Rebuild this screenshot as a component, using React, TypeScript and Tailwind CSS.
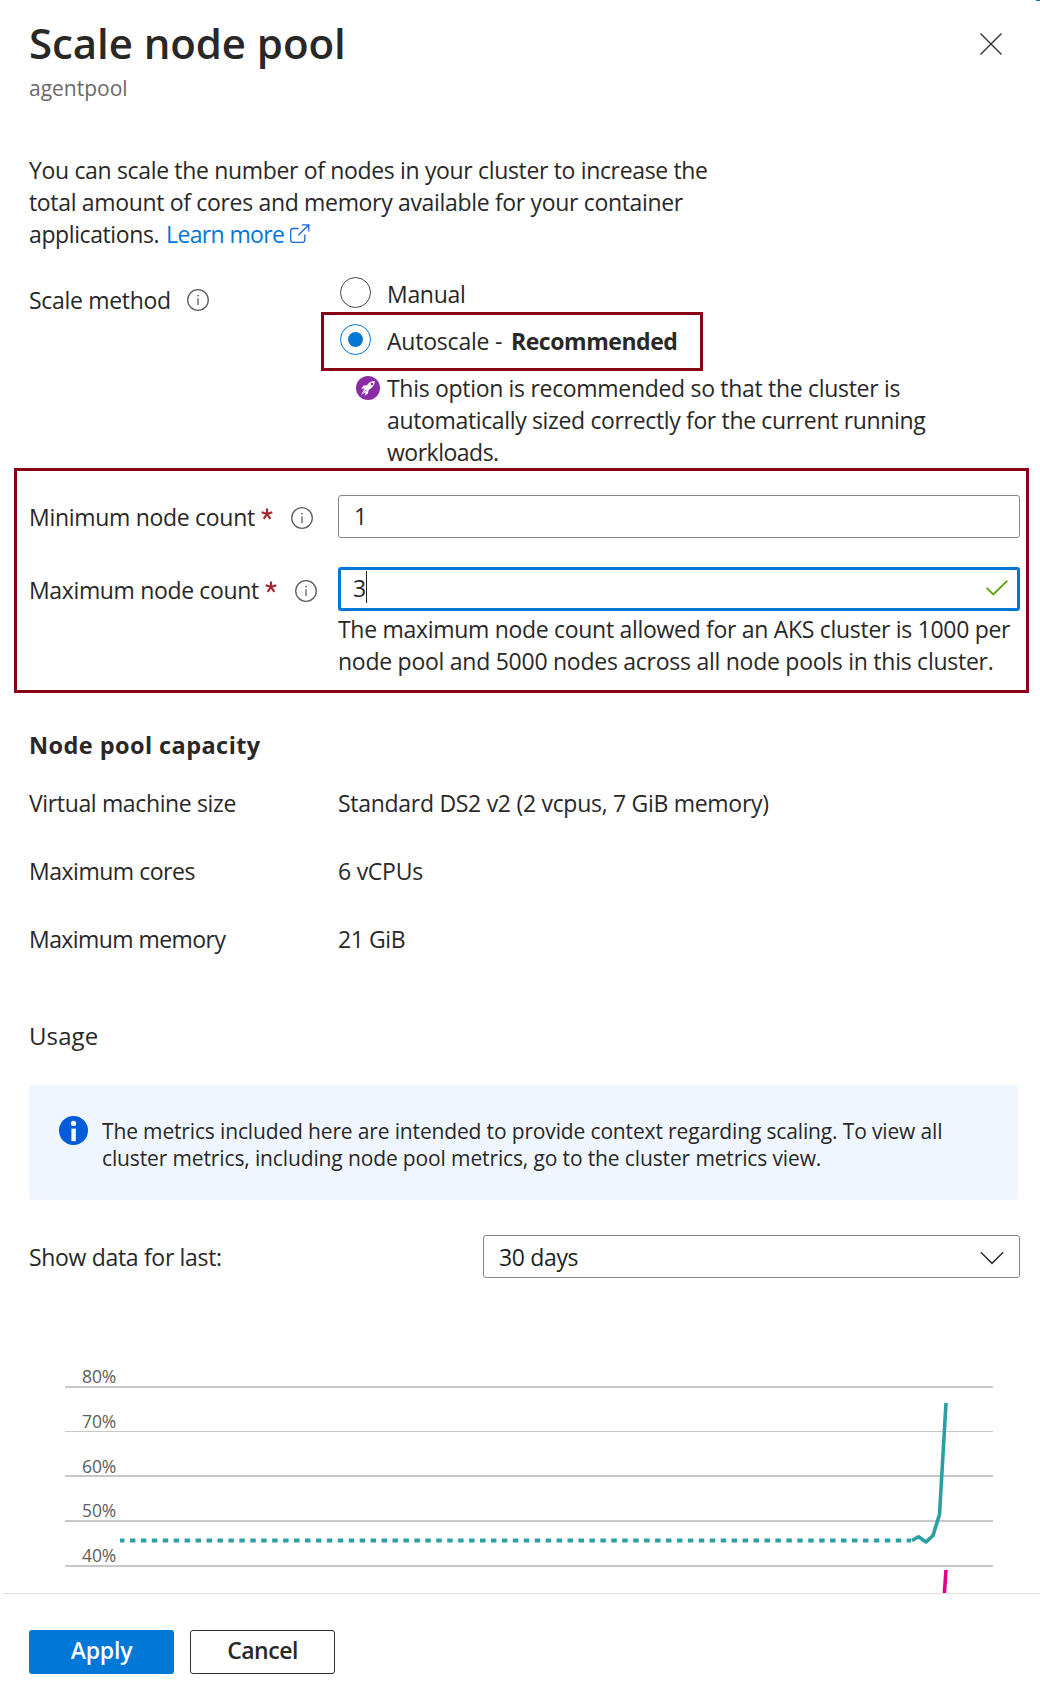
import React from "react";

function InfoIcon() {
  return (
    <svg viewBox="0 0 22 22" className="h-[22px] w-[22px] shrink-0" fill="none">
      <circle cx="11" cy="11" r="10.3" stroke="#605e5c" strokeWidth="1.3" />
      <path d="M11 9.2V16" stroke="#605e5c" strokeWidth="1.3" />
      <circle cx="11" cy="6.6" r="0.9" fill="#605e5c" />
    </svg>
  );
}

function RocketIcon() {
  return (
    <svg viewBox="0 0 24 24" className="mt-1 h-6 w-6 shrink-0">
      <circle cx="12" cy="12" r="12" fill="#8a2da5" />
      <path
        fill="#fff"
        d="M18.9 5.1c-3.400 0-5.900 1.300-7.900 4.100l-3.500.4-2.300 3.200 3.100-.3-.8 1.900-2.500 4.700 4.300-2.700.3.500-1 3 3.300-2.300.8-3.500c3.500-2 5.900-4.900 6.200-9z"
      />
      <circle cx="15.900" cy="8" r="1.250" fill="#8a2da5" />
      <path d="M8.200 13.200l2.600 2.600M6 18.200l4-4" stroke="#8a2da5" strokeWidth="0.5" />
    </svg>
  );
}

function FieldLabel({ text, tracking }: { text: string; tracking: string }) {
  return (
    <div className="flex items-start">
      <span className={tracking}>{text}</span>
      <svg viewBox="0 0 12 12" className="ml-[6px] mt-[7px] h-3 w-3" stroke="#a4262c" strokeWidth="2.2" fill="none">
        <path d="M6 0.500V6M6 6L0.700 4.200M6 6L11.300 4.200M6 6L2.700 10.800M6 6L9.300 10.800" />
      </svg>
      <div className="ml-[18px] mt-[6px]">
        <InfoIcon />
      </div>
    </div>
  );
}

const capacity = [
  { name: "Virtual machine size", nameCls: "tracking-[-0.36px]", value: "Standard DS2 v2 (2 vcpus, 7 GiB memory)", valueCls: "tracking-[-0.29px]" },
  { name: "Maximum cores", nameCls: "tracking-[-0.48px]", value: "6 vCPUs", valueCls: "tracking-[-0.25px]" },
  { name: "Maximum memory", nameCls: "tracking-[-0.56px]", value: "21 GiB", valueCls: "tracking-[-0.42px]" },
];

const ticks = [
  { label: "80%", y: 28, h: 2 },
  { label: "70%", y: 73, h: 1 },
  { label: "60%", y: 117, h: 2 },
  { label: "50%", y: 162, h: 2 },
  { label: "40%", y: 207, h: 2 },
];
const tickBaselines = [25, 70, 115, 159, 204];

function UsageChart() {
  return (
    <svg viewBox="0 0 1040 235" className="block h-[235px] w-[1040px]" fill="none">
      {ticks.map((t, i) => (
        <g key={t.label}>
          <rect x="65" y={t.y} width="928" height={t.h} fill="#c8c8c8" />
          <text x="82" y={tickBaselines[i]} fill="#605e5c" fontSize="17.5" letterSpacing="-0.1" fontFamily="Open Sans, sans-serif">
            {t.label}
          </text>
        </g>
      ))}
      <path d="M120 182.500H911" stroke="#2aa0a4" strokeWidth="3.800" strokeDasharray="5.470 5.470" strokeDashoffset="1" />
      <path d="M912 182.500L918.500 178.800L926 184L933 177.500L939.500 156.500L946 45" stroke="#2aa0a4" strokeWidth="3.600" strokeLinejoin="round" />
      <path d="M946 212L944.400 235" stroke="#e3008c" strokeWidth="3.600" />
    </svg>
  );
}

export default function App() {
  return (
    <div className="relative flex h-[1695px] w-[1040px] flex-col overflow-hidden bg-white font-['Open_Sans',sans-serif] text-[23px] leading-8 whitespace-nowrap text-[#292827]">
      <div className="absolute top-0 right-0 h-px w-1 bg-[#0078d4]" />

      <header className="flex h-[154px] items-start justify-between pl-[29px]">
        <div>
          <h1 className="mt-[14px] text-[42px] leading-[58px] font-semibold tracking-[-0.08px]">Scale node pool</h1>
          <p className="mt-px text-[21px] leading-[30px] text-[#6b6967]">agentpool</p>
        </div>
        <svg viewBox="0 0 22 22" className="mt-[33px] mr-[38px] h-[22px] w-[22px]" stroke="#323130" strokeWidth="1.400">
          <path d="M0.500 0.500L21.500 21.500M21.500 0.500L0.500 21.500" />
        </svg>
      </header>

      <section className="h-[124px] pl-[29px]">
        <p className="tracking-[-0.34px]">You can scale the number of nodes in your cluster to increase the</p>
        <p className="tracking-[-0.33px]">total amount of cores and memory available for your container</p>
        <p className="flex">
          <span className="w-[137px] tracking-[-0.4px]">applications.</span>
          <a className="w-[124px] tracking-[-0.63px] text-[#0078d4]">Learn more</a>
          <svg viewBox="0 0 20 20" className="mt-[6px] h-5 w-5" fill="none" stroke="#1a66e0" strokeWidth="1.300">
            <path d="M8.500 4.500H3Q0.700 4.500 0.700 6.800V16Q0.700 18.300 3 18.300H12.500Q14.800 18.300 14.800 16V10.500M12 0.800H18.800V7.500M18.800 0.800L8.300 11.300" />
          </svg>
        </p>
      </section>

      <section className="flex h-[190px] pl-[29px]">
        <div className="flex w-[292px] items-start pt-[6px]">
          <span className="tracking-[-0.31px]">Scale method</span>
          <div className="mt-[5px] ml-4">
            <InfoIcon />
          </div>
        </div>
        <div>
          <div className="flex h-[34px] items-start pl-[19px]">
            <span className="-mt-px h-[31px] w-[31px] rounded-full border border-[#484644]" />
            <span className="ml-4 tracking-[-0.3px]">Manual</span>
          </div>
          <div className="flex h-[59px] w-[382px] items-start border-[3px] border-[#8a0017] pt-[9px] pl-4">
            <span className="flex h-[31px] w-[31px] items-center justify-center rounded-full border border-[#0078d4]">
              <span className="h-[15px] w-[15px] rounded-full bg-[#0078d4]" />
            </span>
            <span className="mt-px ml-4 w-[124px] tracking-[-0.21px]">Autoscale -</span>
            <b className="mt-px font-bold tracking-[-0.45px]">Recommended</b>
          </div>
          <div className="flex items-start pt-px pl-[35px]">
            <RocketIcon />
            <div className="ml-[7px]">
              <p className="tracking-[-0.31px]">This option is recommended so that the cluster is</p>
              <p className="tracking-[-0.35px]">automatically sized correctly for the current running</p>
              <p className="tracking-[-0.5px]">workloads.</p>
            </div>
          </div>
        </div>
      </section>

      <section className="ml-[14px] h-[225px] w-[1015px] border-[3px] border-[#8a0017] pt-6 pr-[6px] pl-3">
        <div className="flex h-[72px]">
          <div className="w-[309px] pt-[6px]">
            <FieldLabel text="Minimum node count" tracking="tracking-[-0.3px]" />
          </div>
          <div className="h-[43px] flex-1 rounded-[3px] border border-[#8a8886] pt-1 pl-[15px]">1</div>
        </div>
        <div className="flex">
          <div className="w-[309px] pt-[7px]">
            <FieldLabel text="Maximum node count" tracking="tracking-[-0.35px]" />
          </div>
          <div className="flex-1">
            <div className="flex h-11 items-start justify-between rounded-[3px] border-[3px] border-[#0078d7] pt-[2px] pr-[9px] pl-3">
              <div className="flex">
                <span className="w-[13px]">3</span>
                <span className="-mt-px h-8 w-px bg-[#201f1e]" />
              </div>
              <svg viewBox="0 0 22 16" className="mt-2 h-4 w-[22px]" fill="none" stroke="#57a300" strokeWidth="1.800">
                <path d="M0.600 7.800L7.300 14.500L21.300 0.700" />
              </svg>
            </div>
            <p className="mt-[2px] tracking-[-0.3px]">The maximum node count allowed for an AKS cluster is 1000 per</p>
            <p className="tracking-[-0.26px]">node pool and 5000 nodes across all node pools in this cluster.</p>
          </div>
        </div>
      </section>

      <section className="mt-9 pl-[29px]">
        <h2 className="h-[58px] text-[23.500px] font-bold tracking-[0.43px]">Node pool capacity</h2>
        {capacity.map((row) => (
          <div key={row.name} className="flex h-[68px]">
            <span className={"w-[309px] " + row.nameCls}>{row.name}</span>
            <span className={row.valueCls}>{row.value}</span>
          </div>
        ))}
        <h3 className="mt-[29px] text-[24px] tracking-[0.1px]">Usage</h3>
      </section>

      <section className="mt-[33px] ml-[29px] flex h-[115px] w-[989px] items-start rounded-[3px] bg-[#eff6ff] pt-[31px] pl-[30px]">
        <svg viewBox="0 0 29 29" className="h-[29px] w-[29px]">
          <circle cx="14.500" cy="14.500" r="14.500" fill="#015cda" />
          <circle cx="14.500" cy="7.400" r="2.600" fill="#fff" />
          <rect x="12.400" y="12.600" width="4.400" height="12.600" fill="#fff" />
        </svg>
        <div className="mt-[2px] ml-[14px] text-[21px] leading-[27px]">
          <p className="tracking-[-0.15px]">The metrics included here are intended to provide context regarding scaling. To view all</p>
          <p className="tracking-[-0.13px]">cluster metrics, including node pool metrics, go to the cluster metrics view.</p>
        </div>
      </section>

      <section className="mt-[35px] flex pl-[29px]">
        <span className="w-[454px] pt-[6px] tracking-[-0.32px]">Show data for last:</span>
        <div className="flex h-[43px] w-[537px] justify-between rounded-[3px] border border-[#8a8886] pt-[5px] pr-[15px] pl-[15px] tracking-[-0.35px] text-[#201f1e]">
          30 days
          <svg viewBox="0 0 24 14" className="mt-[10px] h-[14px] w-6" fill="none" stroke="#323130" strokeWidth="1.500">
            <path d="M0.800 1.200L12 12.400L23.200 1.200" />
          </svg>
        </div>
      </section>

      <section className="mt-20 h-[235px]">
        <UsageChart />
      </section>

      <footer className="ml-[3px] flex flex-1 gap-4 border-t border-[#e1dfdd] pt-9 pl-[26px] font-semibold">
        <button className="flex h-11 w-[145px] justify-center rounded-[3px] bg-[#0078d7] pt-1 tracking-[-0.2px] text-white">Apply</button>
        <button className="flex h-11 w-[145px] justify-center rounded-[3px] border border-[#323130] pt-[3px] tracking-[-0.5px]">Cancel</button>
      </footer>
    </div>
  );
}
